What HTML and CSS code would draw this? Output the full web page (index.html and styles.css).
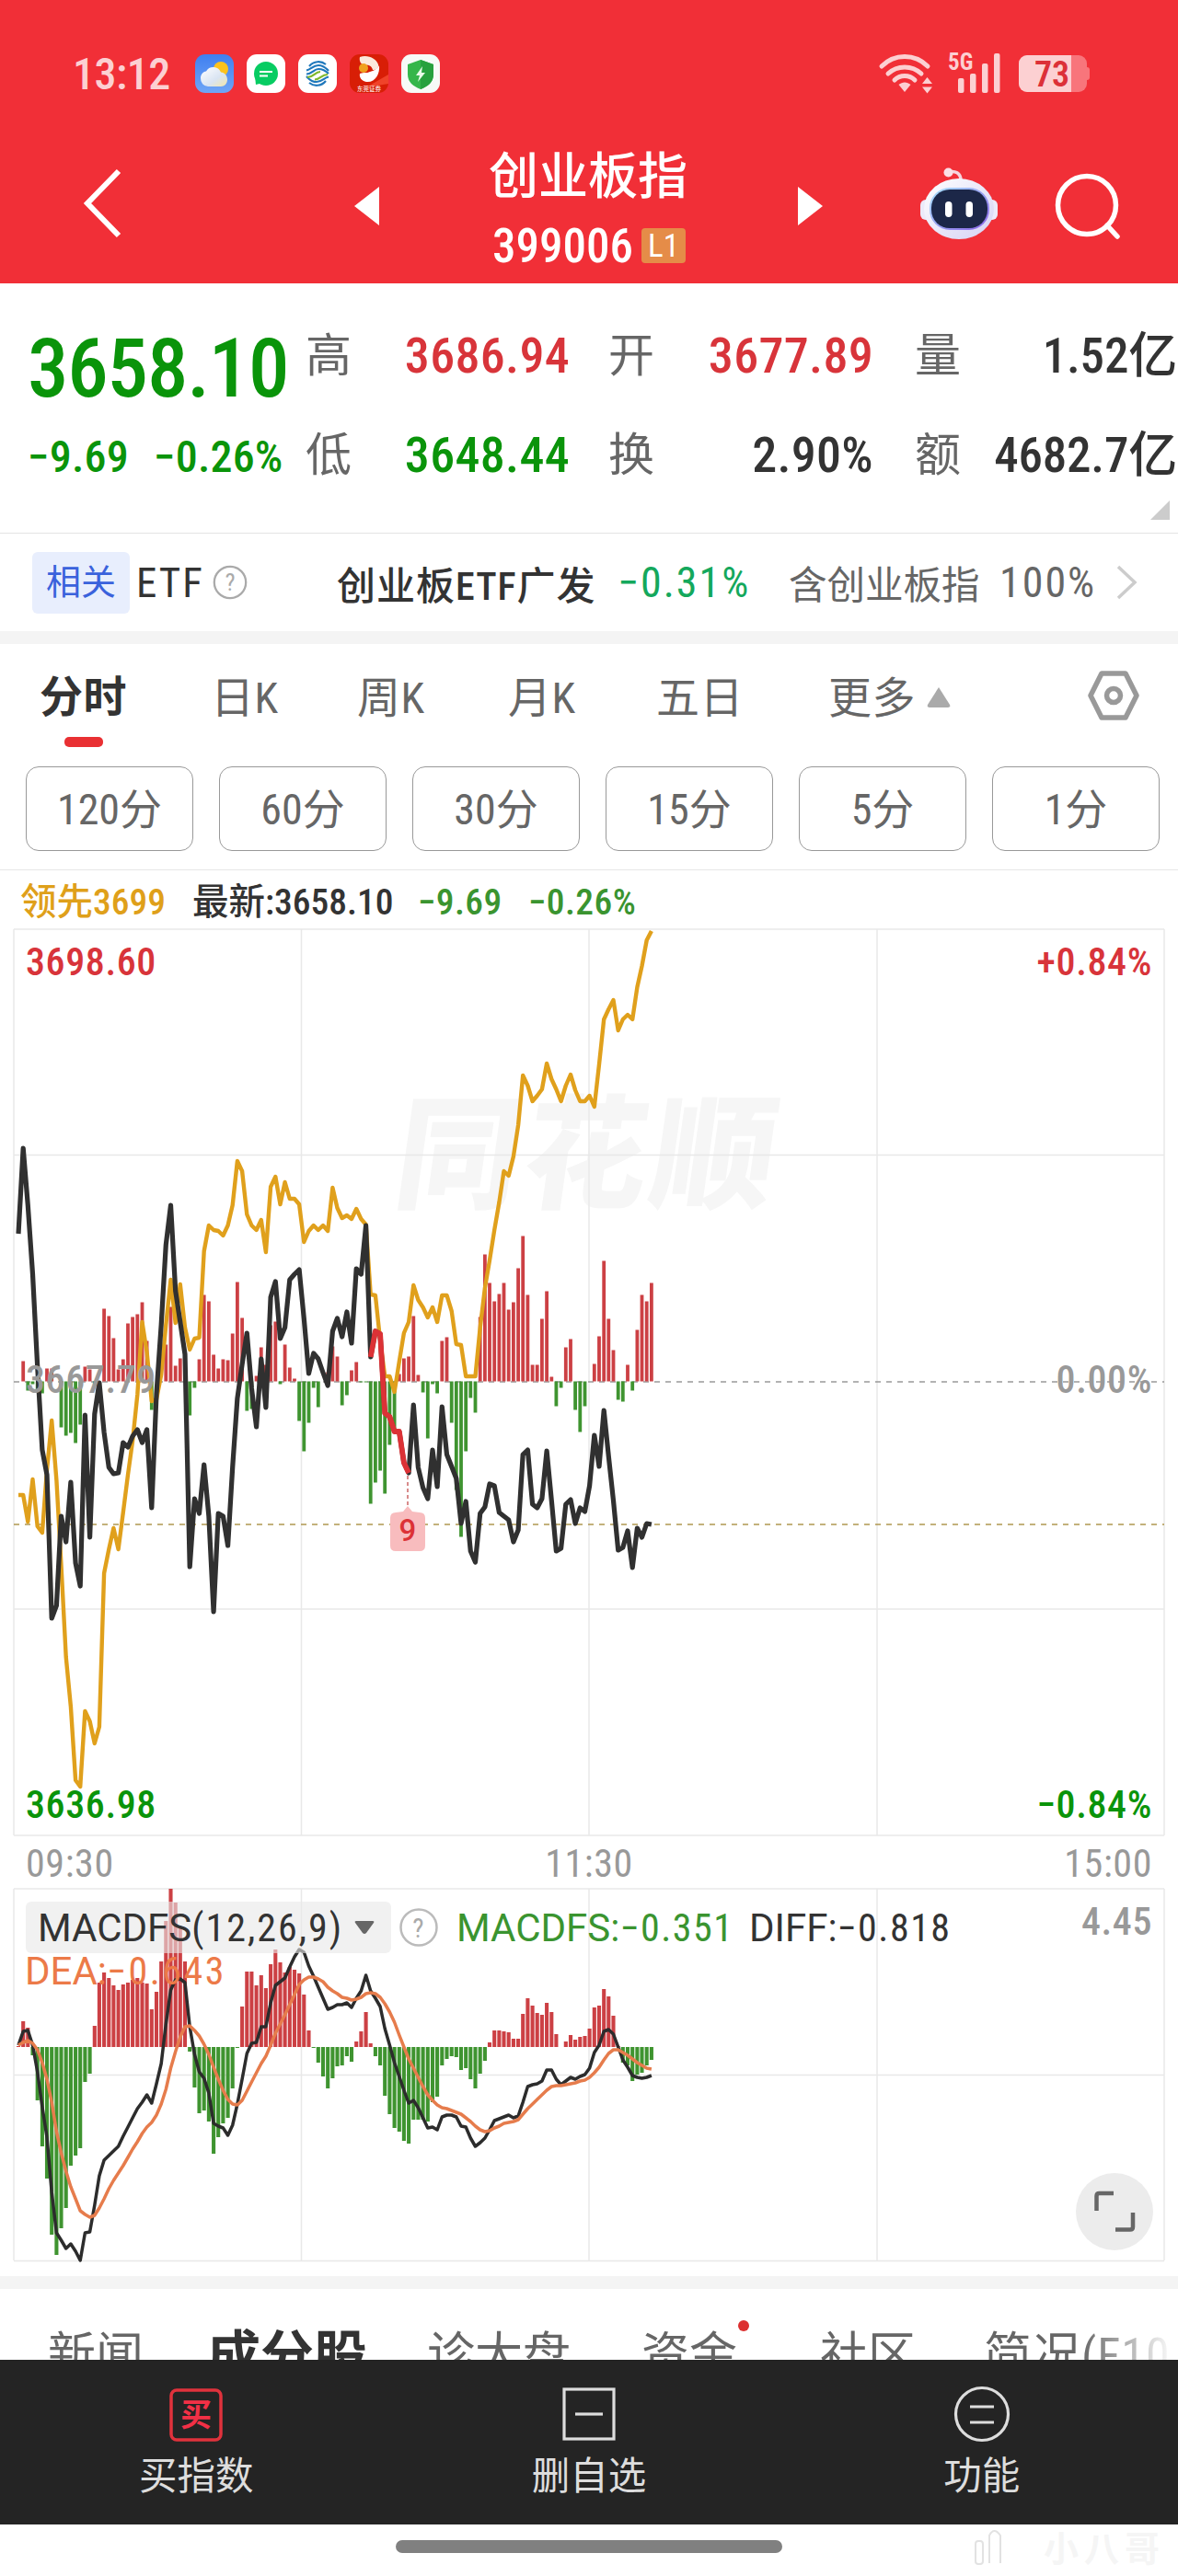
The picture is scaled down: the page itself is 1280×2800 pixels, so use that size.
FILE: index.html
```
<!DOCTYPE html>
<html lang="zh-CN">
  <head>
    <meta charset="UTF-8" />
    <meta name="viewport" content="width=device-width, initial-scale=1.0" />
    <title>创业板指 399006</title>
    <link rel="stylesheet" href="styles.css">
  </head>
  <body>
    <header class="header">
      <div class="status">
        <span class="time">13:12</span>
        <div class="apps">
          <svg width="42" height="42" viewBox="0 0 42 42">
            <defs>
              <linearGradient id="sky" x1="0" y1="0" x2="0" y2="1"><stop offset="0" stop-color="#3f7ff0" /><stop offset="1" stop-color="#6fa6f6" /></linearGradient>
              <linearGradient id="cloud" x1="0" y1="0" x2="1" y2="1"><stop offset="0" stop-color="#fff" /><stop offset=".6" stop-color="#d9e4f2" /><stop offset="1" stop-color="#f4e7a8" /></linearGradient>
            </defs>
            <rect width="42" height="42" rx="11" fill="url(#sky)" />
            <circle cx="28" cy="16" r="8" fill="#fdc21c" />
            <path d="M14 35a8.500 8.500 0 0 1-8-9c0-4 2.500-7 6-7.500a9 9 0 0 1 16 1c4 .5 7 3.500 7 8s-3 7.500-7 7.500z" fill="url(#cloud)" />
          </svg>
          <svg width="42" height="42" viewBox="0 0 42 42">
            <rect width="42" height="42" rx="11" fill="#fff" />
            <circle cx="21" cy="21" r="13" fill="#07cc62" />
            <path d="M9 24l1 9 8-2z" fill="#07cc62" />
            <path d="M14 19h14M14 23.500h9" stroke="#fff" stroke-width="1.800" />
          </svg>
          <svg width="42" height="42" viewBox="0 0 42 42" fill="none" stroke-width="2.200">
            <rect width="42" height="42" rx="11" fill="#fff" />
            <g stroke="#1f78bc">
              <path d="M12 13c5-6 13-6 18-2" />
              <path d="M9 17.500c5-1 7-5.500 13-5.500s8 3 11 6" />
              <path d="M9 21.500c6 0 8-5.500 13-5.500s8 2 11 5" />
              <path d="M30 29c-5 6-13 6-18 2" />
              <path d="M33 24.500c-5 1-7 5.500-13 5.500s-8-3-11-6" />
            </g>
            <path d="M10 25c7 0 8-6 14-6M18 27.500c6 0 7-5.500 14-5.500" stroke="#7fb82c" />
          </svg>
          <svg width="42" height="42" viewBox="0 0 42 42">
            <rect width="42" height="42" rx="11" fill="#d81e06" />
            <path d="M42 22L18 36l24-4z" fill="#f0432a" />
            <path d="M11 3c9-3 18 2 20 8 1 4-3 6-6 6-1-5-5-6-9-5-4-1-6-5-5-9z" fill="#fbe9dc" />
            <circle cx="15" cy="15" r="5" fill="#f0a01e" />
            <path d="M11 21c5-2 7 0 11-2 4-1 9-4 10-7 1 9-4 19-14 18-5-1-8-5-7-9z" fill="#fff" />
            <text x="21" y="39.500" class="app-text">东莞证券</text>
          </svg>
          <svg width="42" height="42" viewBox="0 0 42 42">
            <rect width="42" height="42" rx="11" fill="#f7faf7" />
            <path d="M21 6l14 5v11c0 8-6 13-14 16C13 35 7 30 7 22V11z" fill="#35b64a" />
            <path d="M21 6l14 5v11c0 8-6 13-14 16z" fill="#27a13e" />
            <path d="M23 13l-7 10h4l-2 7 8-10h-4z" fill="#e8fbe9" />
          </svg>
        </div>
        <svg class="wifi" width="60" height="44" viewBox="0 0 60 44" fill="none" stroke="#fcd0d2" stroke-width="5" stroke-linecap="round">
          <path d="M4 14c14-14 36-14 50 0" />
          <path d="M11 22c10-9.500 26-9.500 36 0" />
          <path d="M18 29c6-6 16-6 22 0" />
          <path d="M22.500 34c4-3.500 9-3.500 13 0L29 42z" fill="#fcd0d2" stroke="none" />
          <path d="M48 33l5.500-7 5.500 7zM48 36.500l5.500 7 5.500-7z" fill="#fcd0d2" stroke="none" />
        </svg>
        <svg class="signal" width="58" height="44" viewBox="0 0 58 44" fill="#fcd0d2">
          <text x="0" y="18" class="net">5G</text>
          <rect x="11" y="27" width="6.500" height="16" rx="2" />
          <rect x="24" y="22" width="6.500" height="21" rx="2" />
          <rect x="37" y="11" width="6.500" height="32" rx="2" />
          <rect x="50" y="0" width="6.500" height="43" rx="2" />
        </svg>
        <svg class="battery" width="78" height="40" viewBox="0 0 78 40">
          <rect width="74" height="40" rx="9" fill="#f8757b" />
          <path d="M9 0h48v40H9a9 9 0 0 1-9-9V9a9 9 0 0 1 9-9z" fill="#fcd0d2" />
          <path d="M74 13c2 0 3 1 3 3v8c0 2-1 3-3 3z" fill="#f8757b" />
          <text x="17" y="34" class="charge">73</text>
        </svg>
      </div>

      <div class="topbar">
        <svg class="back" width="42" height="74" viewBox="0 0 42 74" fill="none" stroke="#fff" stroke-width="6"><path d="M39 2L5 37l34 35" /></svg>
        <svg class="prev" width="27" height="42"><path d="M0 21L27 0v42z" fill="#fff" /></svg>
        <div class="title">
          <div class="name">创业板指</div>
          <div class="code">399006 <span class="level">L1</span></div>
        </div>
        <svg class="next" width="27" height="42"><path d="M27 21L0 0v42z" fill="#fff" /></svg>
        <svg class="robot" width="84" height="78" viewBox="0 0 84 78">
          <defs>
            <linearGradient id="shell" x1="0" y1="0" x2="1" y2="1"><stop offset="0" stop-color="#fff" /><stop offset="1" stop-color="#d5d2f4" /></linearGradient>
            <linearGradient id="rim" x1="0" y1="0" x2="1" y2="1"><stop offset="0" stop-color="#a9e3fa" /><stop offset="1" stop-color="#8a62e8" /></linearGradient>
          </defs>
          <path d="M30 5c8-2 14 1 14 9" fill="none" stroke="#f5d4de" stroke-width="3.500" />
          <circle cx="30.500" cy="5.500" r="5" fill="#fbdfe6" />
          <rect x="0" y="35" width="14" height="22" rx="6" fill="#eceafa" />
          <rect x="70" y="35" width="14" height="22" rx="6" fill="#eceafa" />
          <ellipse cx="42" cy="45" rx="38" ry="33" fill="url(#shell)" />
          <rect x="10" y="22" width="65" height="46" rx="22" fill="url(#rim)" />
          <rect x="12" y="24" width="61" height="42" rx="20" fill="#1c2748" />
          <rect x="27" y="37" width="7.500" height="17" rx="3.700" fill="#fff" />
          <rect x="49.500" y="37" width="7.500" height="17" rx="3.700" fill="#fff" />
        </svg>
        <svg class="search" width="72" height="72" viewBox="0 0 72 72" fill="none" stroke="#fff" stroke-width="5.500" stroke-linecap="round">
          <circle cx="35" cy="34" r="31.500" />
          <path d="M57 56l11 12" />
        </svg>
      </div>
    </header>

    <section class="quote">
      <div class="price green">3658.10</div>
      <div class="change green"><span>−9.69</span><span>−0.26%</span></div>
      <div class="cell high"><label>高</label><b class="red">3686.94</b></div>
      <div class="cell open"><label>开</label><b class="red">3677.89</b></div>
      <div class="cell vol"><label>量</label><b>1.52亿</b></div>
      <div class="cell low"><label>低</label><b class="green">3648.44</b></div>
      <div class="cell turn"><label>换</label><b>2.90%</b></div>
      <div class="cell amount"><label>额</label><b>4682.7亿</b></div>
      <svg class="corner" width="21" height="21"><path d="M21 0v21H0z" fill="#ccc" /></svg>
    </section>

    <section class="etf">
      <span class="tag">相关</span>
      <span class="etf-label">ETF</span>
      <svg class="help" width="38" height="38" viewBox="0 0 42 42"><circle cx="21" cy="21" r="19" fill="none" stroke="#aaa" stroke-width="2.500" /><text x="21" y="31" class="qmark">?</text></svg>
      <span class="etf-name">创业板ETF广发</span>
      <span class="etf-change">−0.31%</span>
      <span class="etf-hold">含创业板指</span>
      <span class="etf-pct">100%</span>
      <svg class="more" width="23" height="38" fill="none" stroke="#ccc" stroke-width="3.500"><path d="M2 2l18 17L2 36" /></svg>
    </section>

    <nav class="periods">
      <span class="active">分时</span>
      <span>日K</span>
      <span>周K</span>
      <span>月K</span>
      <span>五日</span>
      <span>更多<svg class="up" width="26" height="22"><path d="M13 0l12 19q1 3-2 3H3q-3 0-2-3z" fill="#aaa" /></svg></span>
      <svg class="setting" width="56" height="56" viewBox="0 0 56 56" fill="none" stroke="#999" stroke-width="5.500" stroke-linejoin="round">
        <path d="M15 4h26l12 24-12 24H15L3 28z" />
        <circle cx="28" cy="28" r="7.500" />
      </svg>
    </nav>

    <div class="minutes">
      <span>120分</span><span>60分</span><span>30分</span><span>15分</span><span>5分</span><span>1分</span>
    </div>

    <div class="legend">
      <span class="lead">领先3699</span>
      <span class="last">最新:3658.10</span>
      <span class="diff">−9.69</span>
      <span class="diff">−0.26%</span>
    </div>

    <section class="chart">
      <div class="watermark">同花顺</div>
      <svg id="plot" width="1280" height="1464" viewBox="0 1008 1280 1464">
        <g id="grid"></g>
        <g id="series"></g>
        <g>
          <path d="M443 1604V1638" stroke="#c66" stroke-width="1.500" stroke-dasharray="4 3" />
          <path d="M430 1644l8-1 5-6 5 6 8 1q6 0 6 6v30q0 6-6 6h-26q-6 0-6-6v-30q0-6 6-6z" fill="#f8bcbe" />
          <text x="443" y="1675" class="nine">9</text>
        </g>
      </svg>
      <span class="axis ceil red">3698.60</span>
      <span class="axis ceil right red">+0.84%</span>
      <span class="axis zero">3667.79</span>
      <span class="axis zero right">0.00%</span>
      <span class="axis floor green">3636.98</span>
      <span class="axis floor right green">−0.84%</span>
      <div class="times"><span>09:30</span><span>11:30</span><span>15:00</span></div>
      <div class="macd-head">
        <span class="macd-name"><i>MACDFS</i>(12,26,9)<svg width="22" height="14"><path d="M2 0h18q2 0 1 2l-8 11q-2 2-4 0L1 2Q0 0 2 0z" fill="#666" /></svg></span>
        <svg class="macd-help" width="42" height="42" viewBox="0 0 42 42"><circle cx="21" cy="21" r="19.500" fill="none" stroke="#bbb" stroke-width="2.500" /><text x="21" y="32" class="qmark">?</text></svg>
        <span class="macd-val"><i>MACDFS:</i>−0.351</span>
        <span class="diff-val"><i>DIFF:</i>−0.818</span>
      </div>
      <div class="dea-val"><i>DEA:</i>−0.643</div>
      <span class="axis scale right">4.45</span>
      <svg class="expand" width="84" height="84" viewBox="0 0 84 84">
        <circle cx="42" cy="42" r="42" fill="#ececec" />
        <path d="M22.500 41V25q0-3 3-3H41M43 61.500h16q3 0 3-3V43" fill="none" stroke="#666" stroke-width="4.500" />
      </svg>
    </section>

    <nav class="sections">
      <span>新闻</span>
      <span class="active">成分股</span>
      <span>诊大盘</span>
      <span class="dot">资金</span>
      <span>社区</span>
      <span class="fade">简况(F10</span>
    </nav>

    <footer class="actions">
      <div class="action">
        <svg width="62" height="62" viewBox="0 0 62 62"><rect x="4" y="4" width="54" height="54" rx="6" fill="none" stroke="#e0323c" stroke-width="3.500" /><text x="31" y="43" class="buy">买</text></svg>
        <span>买指数</span>
      </div>
      <div class="action">
        <svg width="62" height="62" viewBox="0 0 62 62" fill="none" stroke="#ddd" stroke-width="3.200"><rect x="4" y="3" width="54" height="54" /><path d="M16 30h30" /></svg>
        <span>删自选</span>
      </div>
      <div class="action">
        <svg width="62" height="62" viewBox="0 0 62 62" fill="none" stroke="#ddd" stroke-width="3.200"><circle cx="31" cy="30" r="28.500" /><path d="M18 22h26M18 39h26" /></svg>
        <span>功能</span>
      </div>
    </footer>
    <div class="home">
      <div class="pill"></div>
      <svg class="stamp" width="222" height="42" viewBox="0 0 222 42">
        <g fill="none" stroke="#e2e2e2" stroke-width="2"><rect x="4" y="14" width="8" height="25" rx="3" /><path d="M19 38V8q5-10 12 0v30" /></g>
        <text x="78" y="36" class="stamp-text">小八哥</text>
      </svg>
    </div>

    <script src="script.js"></script>
  </body>
</html>
```
FILE: styles.css
```
* {
  box-sizing: border-box;
}

body {
  margin: 0;
  width: 1280px;
  height: 2800px;
  overflow: hidden;
  background-color: #fff;
  color: #333;
  font-family: Roboto, "Noto Sans CJK SC", sans-serif;
  font-stretch: 75%;
}

svg {
  display: block;
  flex: none;
  overflow: visible;
}

i {
  font-style: normal;
  font-stretch: 100%;
  font-weight: 400;
}

.red {
  color: #d8343a;
}

.green {
  color: #0a940a;
}

/* header */
.header {
  height: 308px;
  background-color: #f12f37;
  color: #fff;
}

.status {
  display: flex;
  align-items: center;
  height: 160px;
  padding-left: 79px;
}

.time {
  width: 133px;
  font-size: 48px;
  font-weight: 500;
  letter-spacing: -0.5px;
  color: #fcd0d2;
}

.apps {
  display: flex;
  gap: 14px;
}

.app-text {
  font-size: 6.500px;
  text-anchor: middle;
  fill: #fff;
}

.wifi {
  margin-left: 476px;
}

.signal {
  margin-left: 16px;
}

.battery {
  margin-left: 19px;
}

.net {
  font-size: 25px;
  font-weight: 700;
}

.charge {
  font-size: 38px;
  font-weight: 600;
  fill: #dc3038;
}

.topbar {
  display: flex;
  align-items: flex-start;
  padding-left: 90px;
}

.back {
  margin-top: 24px;
}

.prev {
  margin: 43px 119px 0 253px;
}

.title {
  width: 214px;
  padding-top: 3px;
}

.name {
  font-size: 54px;
  line-height: 60px;
  font-weight: 500;
  white-space: nowrap;
}

.code {
  display: flex;
  align-items: center;
  justify-content: space-between;
  height: 40px;
  margin-top: 24px;
  padding-left: 4px;
  font-size: 51px;
  font-weight: 500;
}

.level {
  width: 48px;
  height: 38px;
  border-radius: 4px;
  background-color: #e58c48;
  font-size: 35px;
  line-height: 39px;
  font-weight: 400;
  text-align: center;
}

.next {
  margin: 43px 106px 0 122px;
}

.robot {
  margin-top: 22px;
}

.search {
  margin: 29px 0 0 62px;
}

/* quote */
.quote {
  display: grid;
  grid-template-columns: 302px 329px 333px 285px;
  grid-template-rows: 108px 108px 41px;
  grid-template-areas:
    "price high open vol"
    "change low turn amount"
    ". . . corner";
  height: 272px;
  padding-left: 30px;
  padding-top: 25px;
  border-bottom: 1px solid #e4e4e4;
}

.price {
  grid-area: price;
  margin-top: 14px;
  font-size: 89px;
  line-height: 108px;
  font-weight: 550;
  letter-spacing: -1.200px;
}

.change {
  grid-area: change;
  display: flex;
  gap: 27px;
  margin-top: 2px;
  font-size: 48px;
  line-height: 108px;
  font-weight: 500;
  letter-spacing: 0.2px;
  white-space: nowrap;
}

.cell {
  display: flex;
  justify-content: space-between;
  font-size: 54px;
  line-height: 108px;
}

.cell label {
  font-size: 50px;
  color: #666;
}

.cell b {
  font-weight: 500;
  letter-spacing: 0.3px;
}

.high {
  grid-area: high;
  padding-right: 42px;
}

.low {
  grid-area: low;
  padding-right: 42px;
}

.open {
  grid-area: open;
  padding-right: 45px;
}

.turn {
  grid-area: turn;
  padding-right: 45px;
}

.vol {
  grid-area: vol;
}

.amount {
  grid-area: amount;
}

.vol b,
.amount b {
  font-size: 53px;
  letter-spacing: -0.2px;
}

.corner {
  grid-area: corner;
  justify-self: end;
  margin-right: 8px;
  margin-top: -5px;
}

/* related etf */
.etf {
  display: flex;
  align-items: center;
  height: 120px;
  padding: 0 44px 0 35px;
  border-bottom: 14px solid #f4f4f4;
  font-size: 43px;
  white-space: nowrap;
}

.tag {
  width: 106px;
  height: 67px;
  border-radius: 6px;
  background-color: #e8eefd;
  color: #3a62dc;
  font-size: 38px;
  line-height: 67px;
  text-align: center;
}

.etf-label {
  width: 88px;
  margin-left: 7px;
  font-size: 45px;
  letter-spacing: 2px;
}

.help {
  margin-left: -5px;
}

.qmark {
  font-size: 29px;
  text-anchor: middle;
  fill: #aaa;
}

.etf-name {
  width: 305px;
  margin-left: 97px;
  font-size: 42px;
  font-weight: 500;
  letter-spacing: 1px;
}

.etf-change {
  width: 186px;
  font-size: 46px;
  letter-spacing: 2px;
  color: #14a85c;
}

.etf-hold {
  width: 229px;
  font-size: 41.500px;
  color: #666;
}

.etf-pct {
  width: 127px;
  font-size: 46px;
  letter-spacing: 2px;
  color: #666;
}

/* period tabs */
.periods {
  display: grid;
  grid-template-columns: 186px 159px 164px 161px 187px 282px auto;
  height: 133px;
  padding-left: 43px;
  font-size: 47px;
  line-height: 116px;
  color: #666;
}

.periods span {
  display: flex;
  align-items: center;
  height: 118px;
  letter-spacing: 0.5px;
}

.periods .active {
  flex-direction: column;
  align-items: flex-start;
  color: #333;
  font-weight: 700;
}

.periods .active::after {
  content: "";
  flex: none;
  width: 42px;
  height: 11px;
  margin: -15px 0 0 27px;
  border-radius: 5px;
  background-color: #e93033;
}

.up {
  margin-left: 12px;
  margin-top: -3px;
}

.setting {
  margin-top: 28px;
}

.minutes {
  display: grid;
  grid-template-columns: repeat(6, 182px);
  gap: 28px;
  height: 113px;
  padding-left: 28px;
  border-bottom: 1px solid #e6e6e6;
}

.minutes span {
  height: 92px;
  border: 1.500px solid #999;
  border-radius: 14px;
  color: #666;
  font-size: 46px;
  line-height: 92px;
  text-align: center;
}

/* chart */
.legend {
  display: flex;
  height: 62px;
  padding-left: 22px;
  font-size: 39.500px;
  line-height: 70px;
  font-weight: 500;
  white-space: nowrap;
}

.lead {
  width: 187px;
  color: #dfa01a;
}

.last {
  width: 245px;
}

.diff {
  width: 120px;
  letter-spacing: 0.4px;
  color: #3a9430;
}

.chart {
  position: relative;
  height: 1466px;
}

#plot {
  position: relative;
}

.watermark {
  position: absolute;
  left: 431px;
  top: 160px;
  font-size: 134px;
  line-height: 180px;
  font-weight: 900;
  letter-spacing: 5px;
  color: #f6f6f6;
  transform: skewX(-8deg);
}

.nine {
  font: 500 33px Roboto, sans-serif;
  font-stretch: 100%;
  text-anchor: middle;
  fill: #dc3236;
}

.axis {
  position: absolute;
  left: 28px;
  font-size: 42px;
  line-height: 50px;
  font-weight: 500;
  letter-spacing: 0.6px;
}

.axis.right {
  left: auto;
  right: 28px;
}

.ceil {
  top: 13px;
}

.zero {
  top: 467px;
  color: #999;
}

.floor {
  top: 929px;
}

.scale {
  top: 1056px;
  color: #999;
}

.times {
  position: absolute;
  left: 28px;
  right: 28px;
  top: 993px;
  display: flex;
  justify-content: space-between;
  font-size: 42px;
  line-height: 50px;
  font-weight: 450;
  letter-spacing: 0.6px;
  color: #999;
}

.macd-head {
  position: absolute;
  left: 28px;
  top: 1059px;
  display: flex;
  align-items: center;
  height: 56px;
  font-size: 42px;
  font-weight: 450;
  letter-spacing: 1.500px;
  white-space: nowrap;
}

.macd-head i,
.dea-val i {
  letter-spacing: 0;
}

.macd-name {
  display: flex;
  align-items: center;
  width: 397px;
  height: 56px;
  padding-left: 13px;
  border-radius: 6px;
  background-color: rgba(232, 232, 232, 0.6);
  letter-spacing: 2px;
}

.macd-name svg {
  margin-left: 12px;
}

.macd-help {
  margin-left: 9px;
}

.macd-val {
  width: 318px;
  margin-left: 20px;
  color: #3a9430;
}

.dea-val {
  position: absolute;
  left: 27px;
  top: 1110px;
  font-size: 42px;
  line-height: 50px;
  font-weight: 450;
  letter-spacing: 2.500px;
  color: #ec7a48;
}

.expand {
  position: absolute;
  left: 1169px;
  top: 1354px;
}

/* bottom */
.sections {
  display: grid;
  grid-template-columns: 173px 239px 233px 194px 178px auto;
  height: 91px;
  padding-left: 52px;
  padding-top: 40px;
  border-top: 14px solid #f4f4f4;
  overflow: hidden;
  font-size: 52px;
  line-height: 66px;
  white-space: nowrap;
  color: #666;
}

.sections .active {
  font-size: 58px;
  font-weight: 700;
  color: #333;
}

.dot {
  position: relative;
}

.dot::after {
  content: "";
  position: absolute;
  left: 105px;
  top: -6px;
  width: 12px;
  height: 12px;
  border-radius: 50%;
  background-color: #dc3030;
}

.fade {
  background: linear-gradient(to right, #666 50%, #fff 98%);
  background-clip: text;
  -webkit-background-clip: text;
  color: transparent;
  letter-spacing: 1px;
}

.actions {
  position: relative;
  display: flex;
  height: 179px;
  background-color: #242424;
}

.action {
  flex: 1;
  display: flex;
  flex-direction: column;
  align-items: center;
  padding-top: 29px;
  font-size: 41.500px;
  line-height: 60px;
  color: #ddd;
}

.action span {
  margin-top: 6px;
}

.buy {
  font-size: 34px;
  font-weight: 700;
  text-anchor: middle;
  fill: #f23046;
}

.home {
  position: relative;
  display: flex;
  justify-content: center;
  height: 56px;
  padding-top: 17px;
}

.pill {
  width: 420px;
  height: 14px;
  border-radius: 7px;
  background-color: #808080;
}

.stamp {
  position: absolute;
  right: 2px;
  top: 4px;
}

.stamp-text {
  font-size: 38px;
  font-weight: 700;
  letter-spacing: 6px;
  fill: #f5f5f5;
}
```
FILE: script.js
```
// one value per minute, already in plot coordinates
const price = [
  1341, 1248, 1310, 1385, 1485, 1576, 1603, 1759, 1745, 1648, 1676, 1611, 1699, 1724, 1538, 1671, 1537, 1503, 1557, 1595,
  1602, 1601, 1568, 1573, 1561, 1554, 1568, 1554, 1639, 1515, 1440, 1353, 1310, 1403, 1437, 1472, 1703, 1629, 1645, 1592,
  1648, 1752, 1645, 1648, 1680, 1595, 1520, 1483, 1449, 1509, 1551, 1477, 1530, 1410, 1393, 1455, 1443, 1391, 1385, 1380,
  1433, 1493, 1471, 1477, 1492, 1506, 1447, 1433, 1453, 1426, 1460, 1379, 1385, 1332, 1475, 1447, 1450, 1536, 1540, 1556,
  1556, 1590, 1601, 1527, 1595, 1617, 1629, 1576, 1616, 1529, 1581, 1594, 1607, 1656, 1632, 1686, 1698, 1645, 1638, 1613,
  1615, 1644, 1648, 1652, 1676, 1663, 1581, 1576, 1635, 1639, 1629, 1577, 1631, 1686, 1683, 1635, 1630, 1656, 1639, 1643,
  1615, 1560, 1594, 1533, 1583, 1631, 1685, 1682, 1664, 1704, 1661, 1671, 1656, 1657
];
const lead = [
  1625, 1625, 1654, 1608, 1659, 1666, 1598, 1544, 1609, 1701, 1801, 1855, 1935, 1942, 1860, 1871, 1895, 1877, 1710, 1684,
  1661, 1684, 1644, 1603, 1566, 1516, 1437, 1470, 1523, 1521, 1494, 1440, 1391, 1438, 1396, 1443, 1467, 1455, 1454, 1360,
  1332, 1337, 1338, 1343, 1332, 1310, 1262, 1273, 1320, 1332, 1337, 1326, 1361, 1290, 1279, 1309, 1285, 1303, 1303, 1309,
  1350, 1338, 1332, 1337, 1332, 1338, 1291, 1313, 1324, 1321, 1325, 1314, 1325, 1331, 1407, 1408, 1457, 1496, 1496, 1513,
  1480, 1449, 1437, 1397, 1413, 1421, 1432, 1421, 1437, 1408, 1408, 1425, 1461, 1462, 1496, 1496, 1496, 1443, 1400, 1370,
  1337, 1307, 1273, 1278, 1257, 1223, 1169, 1180, 1197, 1191, 1184, 1156, 1173, 1184, 1197, 1180, 1168, 1185, 1197, 1197,
  1191, 1203, 1157, 1108, 1097, 1087, 1120, 1108, 1103, 1108, 1073, 1050, 1022, 1012
];
const power = [
  0, 22, -10, -3, -10, -13, 14, 14, 0, -50, -59, -56, -67, -47, 16, 13, -5, 0, 79, 71,
  47, 13, 24, 63, 70, 73, 86, 44, -31, 0, 0, 40, 81, 17, 25, 0, -37, -7, 24, 94,
  87, 29, 14, 24, 23, 52, 108, 69, -32, -30, 6, 37, 18, 61, 65, -3, 40, 15, 3, -43,
  -76, -45, -7, -28, 0, 10, 38, 27, -26, -15, 12, 21, -1, -1, -133, -110, -97, -122, -69, -54,
  8, 25, 27, 71, 7, -12, -62, -3, -13, 44, 48, -45, -118, -169, -76, -18, -34, 70, 138, 107,
  87, 95, 107, 78, 86, 123, 158, 94, 18, 18, 68, 98, 5, -27, -7, 37, 46, -31, -55, -27,
  0, 19, 49, 131, 68, 34, -20, -22, 18, -10, 56, 94, 87, 107
];
const macd = [
  1, 28, 21, -9, -58, -108, -143, -204, -226, -197, -175, -129, -118, -110, -38, -29, 23, 70, 81, 75,
  67, 62, 68, 70, 73, 75, 70, 69, 41, 60, 93, 137, 172, 157, 129, 93, -5, -44, -72, -69,
  -81, -116, -98, -83, -77, -45, -1, 44, 82, 82, 67, 78, 64, 90, 106, 92, 81, 87, 84, 80,
  57, 18, -1, -17, -32, -45, -34, -21, -20, -10, -16, 6, 17, 38, 4, -10, -20, -53, -73, -88,
  -92, -102, -105, -79, -79, -79, -81, -60, -54, -20, -13, -10, -11, -25, -23, -35, -45, -29, -15, 5,
  18, 18, 17, 16, 9, 9, 36, 53, 45, 37, 35, 48, 38, 14, 0, 6, 13, 8, 11, 12,
  20, 43, 45, 63, 55, 34, 1, -17, -20, -37, -30, -28, -20, -14
];
const diff = [
  2223, 2208, 2207, 2223, 2252, 2290, 2323, 2383, 2427, 2435, 2444, 2439, 2447, 2457, 2427, 2426, 2397, 2365, 2348, 2343,
  2338, 2333, 2322, 2312, 2302, 2292, 2285, 2277, 2286, 2265, 2243, 2200, 2163, 2152, 2151, 2155, 2203, 2233, 2252, 2259,
  2275, 2308, 2311, 2313, 2321, 2310, 2287, 2260, 2232, 2221, 2220, 2203, 2203, 2177, 2158, 2154, 2150, 2138, 2127, 2119,
  2122, 2137, 2148, 2160, 2172, 2184, 2182, 2179, 2179, 2177, 2182, 2172, 2164, 2147, 2164, 2172, 2181, 2205, 2223, 2242,
  2257, 2272, 2286, 2283, 2291, 2302, 2313, 2312, 2315, 2301, 2299, 2299, 2301, 2311, 2312, 2324, 2333, 2329, 2324, 2315,
  2305, 2303, 2301, 2299, 2302, 2300, 2285, 2268, 2266, 2265, 2262, 2250, 2250, 2260, 2266, 2262, 2258, 2260, 2257, 2255,
  2248, 2231, 2223, 2208, 2206, 2211, 2225, 2239, 2247, 2256, 2258, 2259, 2258, 2256
];
const dea = [
  2223, 2220, 2218, 2221, 2228, 2242, 2260, 2285, 2317, 2340, 2360, 2377, 2390, 2403, 2407, 2410, 2408, 2400, 2390, 2379,
  2370, 2362, 2354, 2345, 2336, 2328, 2319, 2312, 2307, 2299, 2287, 2271, 2248, 2230, 2214, 2203, 2202, 2207, 2213, 2222,
  2233, 2247, 2260, 2272, 2282, 2287, 2288, 2283, 2273, 2263, 2253, 2243, 2235, 2223, 2210, 2200, 2190, 2179, 2168, 2157,
  2152, 2149, 2149, 2151, 2154, 2160, 2164, 2167, 2171, 2172, 2174, 2173, 2171, 2167, 2166, 2167, 2171, 2178, 2187, 2198,
  2212, 2225, 2238, 2248, 2258, 2268, 2277, 2283, 2288, 2291, 2292, 2294, 2296, 2298, 2302, 2306, 2311, 2315, 2317, 2316,
  2313, 2311, 2308, 2307, 2306, 2304, 2298, 2292, 2287, 2282, 2277, 2272, 2268, 2267, 2267, 2266, 2265, 2264, 2262, 2261,
  2258, 2253, 2247, 2239, 2232, 2228, 2228, 2231, 2234, 2238, 2242, 2245, 2248, 2249
];

const x = (i) => (20 + i * 5.172).toFixed(1);

function bars(data, base, width) {
  return data
    .map((v, i) => {
      if (!v) return "";
      const y = v > 0 ? base - v : base;
      return `<rect x="${x(i) - width / 2}" y="${y}" width="${width}" height="${Math.abs(v)}" fill="${v > 0 ? "#cc4044" : "#3f9430"}"/>`;
    })
    .join("");
}

function line(data, color, width, from = 0, to = data.length) {
  const points = data.slice(from, to).map((y, i) => `${x(i + from)},${y}`).join(" ");
  return `<polyline points="${points}" fill="none" stroke="${color}" stroke-width="${width}" stroke-linejoin="round"/>`;
}

function rule(x1, y1, x2, y2, color = "#e8e8e8", dash = "") {
  return `<path d="M${x1} ${y1}L${x2} ${y2}" stroke="${color}" stroke-width="1.5" stroke-dasharray="${dash}"/>`;
}

let grid = "";
[1010, 1255.5, 1749, 1995, 2053, 2255.5, 2457.5].forEach((y) => (grid += rule(15, y, 1265, y)));
[15, 327.5, 640, 953, 1265].forEach((gx) => {
  grid += rule(gx, 1010, gx, 1995) + rule(gx, 2053, gx, 2457);
});
grid += rule(15, 1502, 1265, 1502, "#999", "6 6");
grid += rule(15, 1657, 1265, 1657, "#b09850", "6 6");
document.getElementById("grid").innerHTML = grid;

document.getElementById("series").innerHTML =
  bars(power, 1501.5, 3.8) +
  line(lead, "#e0a01c", 4.4) +
  line(price, "#303030", 5.2) +
  line(price, "#dc3236", 5.8, 74, 83) +
  bars(macd, 2225, 4.1) +
  line(diff, "#2c2c2c", 3.5) +
  line(dea, "#e67c4c", 3.5);
```
